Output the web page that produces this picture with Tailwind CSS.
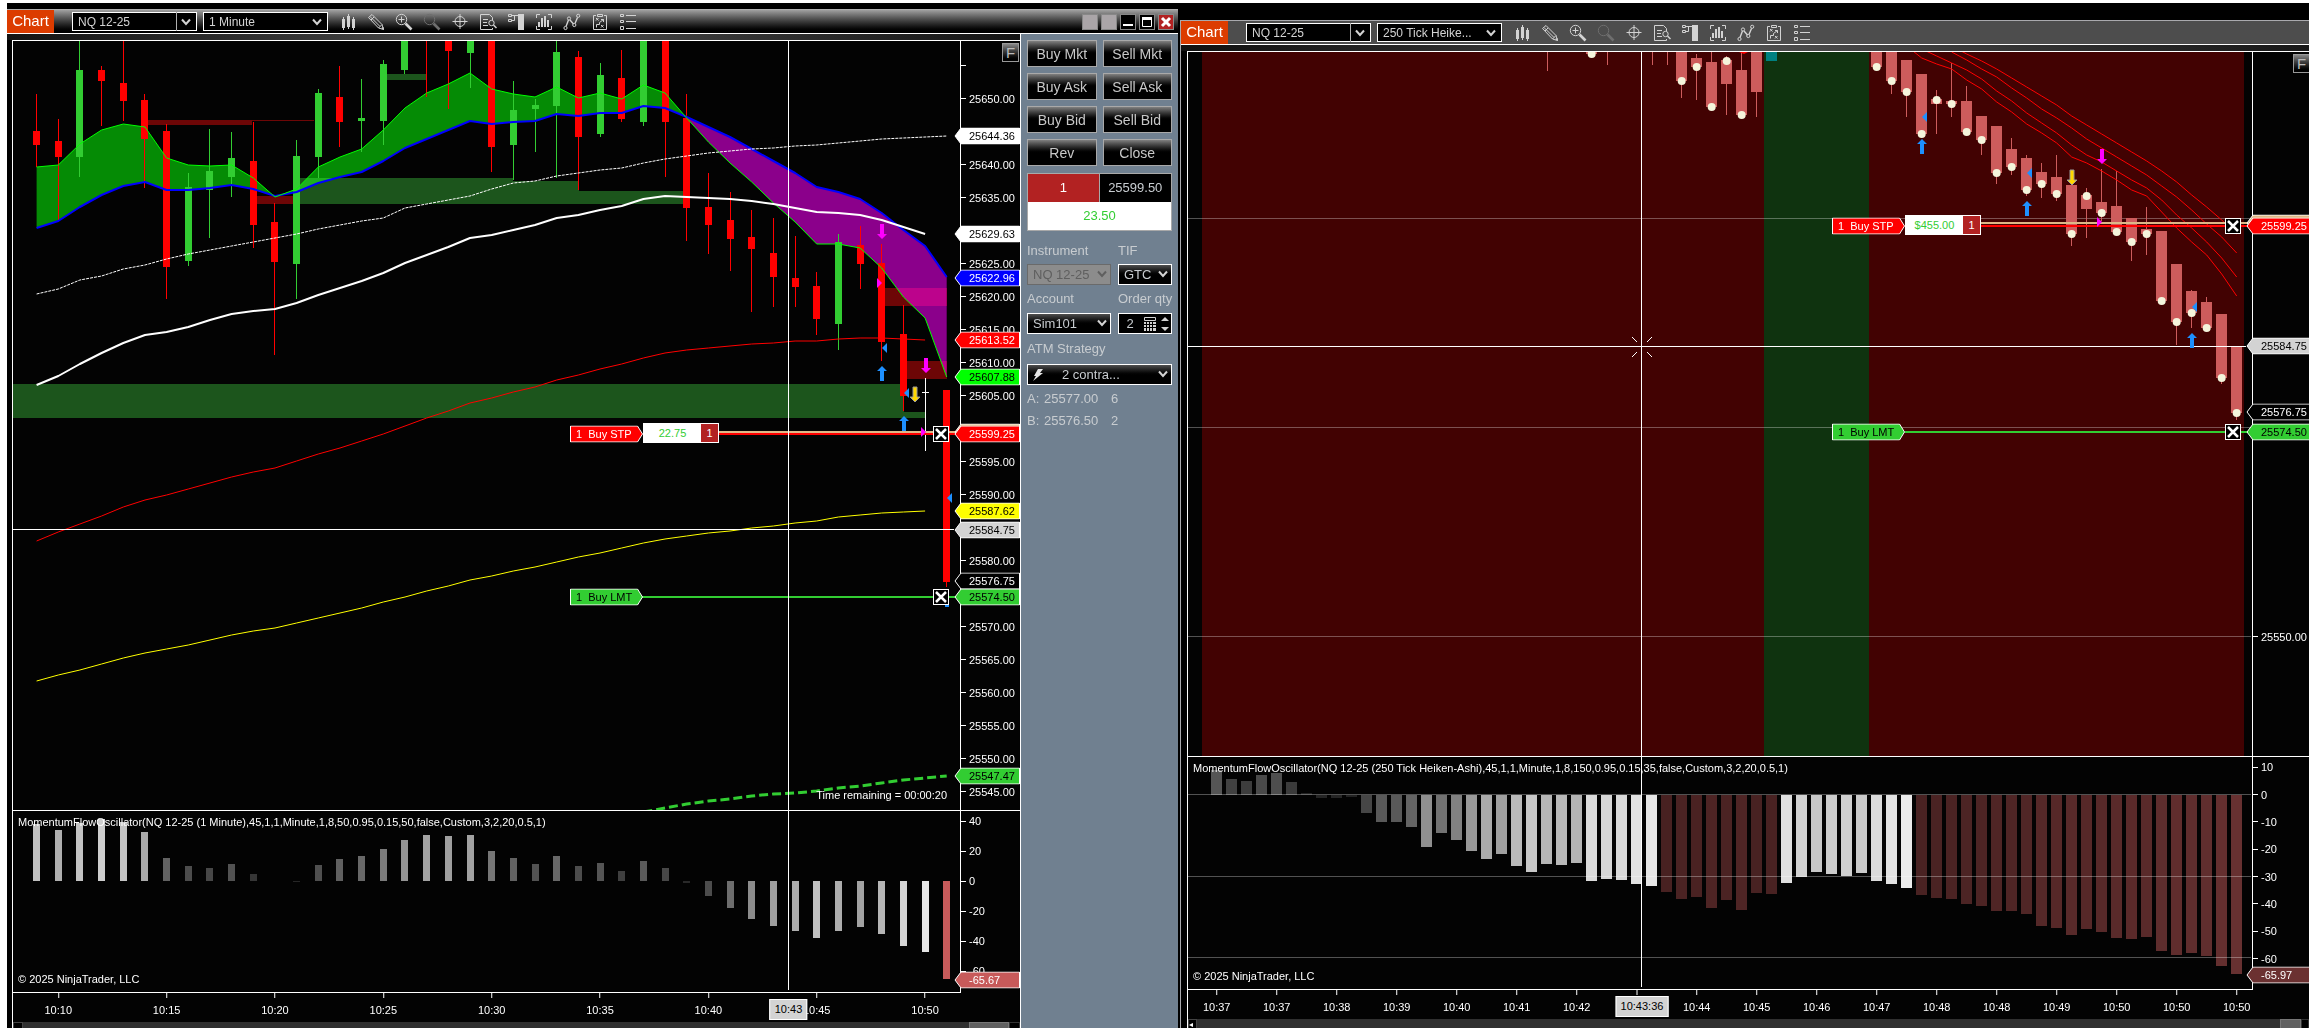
<!DOCTYPE html>
<html lang="en">
<head>
    <meta charset="UTF-8" />
    <meta name="viewport" content="width=device-width, initial-scale=1.0" />
    <title>NinjaTrader - NQ 12-25</title>
    <script src="https://cdn.jsdelivr.net/npm/@tailwindcss/browser@4"></script>
</head>
<body class="h-screen overflow-hidden bg-white pt-[3px] pr-[6px] pb-[5px] pl-[7px] font-['Liberation_Sans',Arial,sans-serif] text-[11px] text-white">

    <!-- toolbar icons -->
    <svg class="hidden" aria-hidden="true">
        <symbol id="i-candles" viewBox="0 0 24 20"><path fill="currentColor" d="M6 7h1V5h1v2h1v9H8v2H7v-2H6zM11 4h1V2h1v2h1v11h-1v2h-1v-2h-1zM16 7h1V5h1v2h1v9h-1v2h-1v-2h-1z" /></symbol>
        <symbol id="i-pencil" viewBox="0 0 24 20"><path fill="none" stroke="currentColor" d="M4.500 5.500L8 2.500l10 10 1.500 5-5-1.500zM6 4.500l10 10M14.500 16l3.500-3.500M7 8l3-3" /><path fill="currentColor" d="M17 16l2.500-1 .5 3z" /></symbol>
        <symbol id="i-zoomin" viewBox="0 0 24 20"><g fill="none" stroke="currentColor"><circle cx="9.500" cy="7.500" r="5.200" /><path d="M9.500 4.500v6M6.500 7.500h6" /><path stroke-width="2.600" d="M13.500 11.500l6 6" /></g></symbol>
        <symbol id="i-zoomout" viewBox="0 0 24 20"><g fill="none" stroke="currentColor"><circle cx="9.500" cy="7.500" r="5.200" /><path stroke-width="2.600" d="M13.500 11.500l6 6" /></g></symbol>
        <symbol id="i-cross" viewBox="0 0 24 20"><g fill="none" stroke="currentColor"><circle cx="12" cy="9.500" r="5" /><path d="M12 2v15M4.500 9.500h15" /></g></symbol>
        <symbol id="i-doc" viewBox="0 0 24 20"><g fill="none" stroke="currentColor"><path d="M16.500 8V5.500l-3-3h-9v15h12V16M7 7.500h5M7 10.500h4M7 13.500h5" /><circle cx="15.500" cy="11" r="2.700" /><path stroke-width="1.500" d="M17.500 13l3 3" /></g></symbol>
        <symbol id="i-dom" viewBox="0 0 24 20"><path fill="none" stroke="currentColor" d="M4.500 2.500h3v2h-3zM4.500 7.500h3v2h-3zM8 3.500h6M8 8.500h2.500v-5" /><path fill="currentColor" d="M14 2h6v16h-6z" /></symbol>
        <symbol id="i-bars" viewBox="0 0 24 20"><path fill="none" stroke="currentColor" d="M8 2.500H4.500V6M16 2.500h3.500V6M8 17.500H4.500V14M16 17.500h3.500V14" /><path fill="currentColor" d="M6 10h2v5H6zM9 6h2v9H9zM12 4h2v11h-2zM15 8h2v7h-2z" /></symbol>
        <symbol id="i-zigzag" viewBox="0 0 24 20"><g fill="none" stroke="currentColor"><path stroke-width="1.400" d="M6 14.500L8.500 8M10 8l3.500 4M15 11.500l2.500-6" /><circle cx="5.500" cy="16" r="1.600" /><circle cx="9" cy="6.500" r="1.600" /><circle cx="14.300" cy="13" r="1.600" /><circle cx="18.200" cy="3.800" r="1.600" /></g></symbol>
        <symbol id="i-board" viewBox="0 0 24 20"><path fill="none" stroke="currentColor" d="M8 3.500H5.500v14h13v-14H16M9.500 2.500h5v2h-5zM8 6l2.500 2.500M10.500 6L8 8.500M8.500 15.500v-3h3v-2l4-3M13 7.500h2.500V10M13 13l2.500 2.500M15.500 13L13 15.500" /></symbol>
        <symbol id="i-list" viewBox="0 0 24 20"><path fill="none" stroke="currentColor" d="M4.500 2.500h3v2h-3zM4.500 8.500h3v2h-3zM4.500 14.500h3v3h-3zM10 3.500h10M10 9.500h10M10 16.500h10" /></symbol>
        <symbol id="i-chevron" viewBox="0 0 10 8"><path fill="none" stroke="#d3d3d3" stroke-width="2" d="M1 1.500l4 4.500 4-4.500" /></symbol>
    </svg>

    <div class="flex h-full bg-black">

        <!-- 1 minute chart with chart trader -->
        <section class="mt-[6px] flex min-w-0 flex-[1171] flex-col">
            <header class="flex h-[25px] shrink-0 items-center border-t border-b border-t-[#b0b0b0] border-b-white bg-linear-to-b from-[#a0a0a0] to-black">
                <div id="toolbarA" class="flex h-full items-center"></div>
                <div class="mr-1 ml-auto flex gap-[3px]">
                    <button aria-label="Link instrument" class="h-4 w-4 border border-[#888] bg-[#aaa5a8]"></button>
                    <button aria-label="Link interval" class="h-4 w-4 border border-[#888] bg-[#aaa5a8]"></button>
                    <button aria-label="Minimize" class="h-4 w-4 border border-[#888] bg-black"><svg viewBox="0 0 14 14" class="block h-full w-full"><path fill="#fff" d="M2 9h10v2H2z" /></svg></button>
                    <button aria-label="Maximize" class="h-4 w-4 border border-[#888] bg-black"><svg viewBox="0 0 14 14" class="block h-full w-full"><path fill="none" stroke="#fff" d="M2.500 3.500h9v8h-9z" /><path fill="#fff" d="M2 2h10v3H2z" /></svg></button>
                    <button aria-label="Close window" class="h-4 w-4 border border-[#888] bg-[#b22222]"><svg viewBox="0 0 14 14" class="block h-full w-full"><path stroke="#fff" stroke-width="3" d="M3 3l8 8M11 3l-8 8" /></svg></button>
                </div>
            </header>
            <div class="flex min-h-0 flex-1">
                <div class="flex min-w-0 flex-1 flex-col border-r border-white">
                    <div class="h-[6px] shrink-0 bg-linear-to-r from-[#141414] via-[#505050] to-[#141414]"></div>
                    <div class="ml-[5px] flex min-h-0 flex-1 flex-col border-t border-l border-white bg-[#030303]">
                        <div class="flex min-h-0 flex-[769]">
                            <div id="priceA" class="relative min-w-0 flex-1"></div>
                            <div id="priceAxisA" class="relative w-[60px] border-l border-white">
                                <button class="absolute top-[2px] right-px z-10 h-[19px] w-[17px] border border-[#999] bg-linear-to-b from-[#888] to-black text-[15px] leading-[17px] text-[#bbb]">F</button>
                            </div>
                        </div>
                        <div class="flex min-h-0 flex-[182] border-t border-white">
                            <div id="oscA" class="relative min-w-0 flex-1 border-b border-white"></div>
                            <div id="oscAxisA" class="relative w-[60px] border-l border-white"></div>
                        </div>
                        <div id="timeA" class="relative mr-[60px] h-[29px] shrink-0"></div>
                        <div class="flex h-[6px] shrink-0 justify-between overflow-hidden bg-[#303030]">
                            <div class="h-2 w-[10px] border border-[#444] bg-black"></div>
                            <div class="flex"><div class="h-2 w-10 border border-[#777] bg-[#606060]"></div><div class="h-2 w-[11px] border border-[#333] bg-black"></div></div>
                        </div>
                    </div>
                </div>

                <!-- chart trader -->
                <aside class="w-[157px] shrink-0 bg-[#708090] px-[6px] pt-[6px] text-[13px] text-[#c8ccd0]">
                    <div id="orderButtons" class="grid grid-cols-2 gap-[6px]"></div>
                    <div class="mt-[7px] grid grid-cols-2 border border-[#a9a9a9] text-center leading-7">
                        <div class="border-r border-[#a9a9a9] bg-[#b22222] text-white">1</div>
                        <div class="bg-black">25599.50</div>
                        <div class="col-span-2 bg-white text-[#32cd32]">23.50</div>
                    </div>
                    <div class="mt-[10px] grid grid-cols-[84px_54px] justify-between gap-y-[3px]">
                        <label for="instrument" class="leading-5">Instrument</label>
                        <label for="tif" class="leading-5">TIF</label>
                        <div class="relative">
                            <select id="instrument" disabled class="block h-[21px] w-full appearance-none border border-[#6a6a6a] bg-[#8c8c8c] pl-[5px] text-[#5f5f5f] opacity-100"><option>NQ 12-25</option></select>
                            <svg class="pointer-events-none absolute top-[6px] right-[4px] h-2 w-[10px]" viewBox="0 0 10 8"><path fill="none" stroke="#5f5f5f" stroke-width="2" d="M1 1.500l4 4.500 4-4.500" /></svg>
                        </div>
                        <div class="relative">
                            <select id="tif" class="block h-[21px] w-full appearance-none border border-white bg-linear-to-b from-[#505050] to-black to-60% pl-[5px]"><option>GTC</option></select>
                            <svg class="pointer-events-none absolute top-[6px] right-[4px] h-2 w-[10px]"><use href="#i-chevron" /></svg>
                        </div>
                        <label for="account" class="leading-[22px]">Account</label>
                        <label for="qty" class="leading-[22px] whitespace-nowrap">Order qty</label>
                        <div class="relative">
                            <select id="account" class="block h-[21px] w-full appearance-none border border-white bg-linear-to-b from-[#505050] to-black to-60% pl-[5px]"><option>Sim101</option></select>
                            <svg class="pointer-events-none absolute top-[6px] right-[4px] h-2 w-[10px]"><use href="#i-chevron" /></svg>
                        </div>
                        <div class="flex h-[21px] items-center border border-white bg-black">
                            <input id="qty" type="text" value="2" class="w-[22px] bg-transparent text-center" />
                            <svg class="ml-[3px] h-[14px] w-3" viewBox="0 0 12 14"><path fill="none" stroke="#d3d3d3" d="M.5.5h11v3H.5z" /><path fill="#d3d3d3" d="M0 5h2v2H0zM3 5h2v2H3zM6 5h2v2H6zM9 5h3v2H9zM0 8h2v2H0zM3 8h2v2H3zM6 8h2v2H6zM9 8h3v2H9zM0 11h2v3H0zM3 11h2v3H3zM6 11h2v3H6zM9 11h3v3H9z" /></svg>
                            <svg class="ml-[5px] h-[14px] w-2" viewBox="0 0 8 14"><path fill="#d3d3d3" d="M0 4l4-4 4 4zM0 10h8l-4 4z" /></svg>
                        </div>
                        <label for="atm" class="col-span-2 leading-6">ATM Strategy</label>
                        <div class="relative col-span-2">
                            <select id="atm" class="block h-[21px] w-full appearance-none border border-white bg-linear-to-b from-[#505050] to-black to-60% pl-[34px]"><option>2 contra...</option></select>
                            <svg class="pointer-events-none absolute top-[5px] left-[6px] h-3 w-[10px]" viewBox="0 0 10 12"><path fill="#e5e5e5" d="M5 0h5L7 4h3L0 12l3-5H1z" /></svg>
                            <svg class="pointer-events-none absolute top-[6px] right-[4px] h-2 w-[10px]"><use href="#i-chevron" /></svg>
                        </div>
                    </div>
                    <dl class="mt-[3px] grid grid-cols-[17px_67px_1fr] leading-[22px]">
                        <dt>A:</dt><dd>25577.00</dd><dd>6</dd>
                        <dt>B:</dt><dd>25576.50</dd><dd>2</dd>
                    </dl>
                </aside>
            </div>
        </section>

        <!-- 250 tick chart -->
        <section class="mt-[17px] ml-[2px] flex min-w-0 flex-[1128] flex-col overflow-hidden border-t border-l border-[#a9a9ad]">
            <header class="flex h-6 shrink-0 items-center border-b border-white bg-[#4d4d4d]">
                <div id="toolbarB" class="flex h-full items-center"></div>
            </header>
            <div class="h-[6px] shrink-0 bg-linear-to-r from-[#101010] via-[#505050] to-[#181818]"></div>
            <div class="ml-[6px] flex min-h-0 flex-1 flex-col border-t border-l border-white bg-[#030303]">
                <div class="flex min-h-0 flex-[704]">
                    <div id="priceB" class="relative min-w-0 flex-1"></div>
                    <div id="priceAxisB" class="relative w-[57px] border-l border-white">
                        <button class="absolute top-[2px] right-0 z-10 h-[19px] w-4 border border-r-0 border-[#999] bg-linear-to-b from-[#888] to-black text-[15px] leading-[17px] text-[#bbb]">F</button>
                    </div>
                </div>
                <div class="flex min-h-0 flex-[233] border-t border-white">
                    <div id="oscB" class="relative min-w-0 flex-1 border-b border-white"></div>
                    <div id="oscAxisB" class="relative w-[57px] border-l border-white"></div>
                </div>
                <div id="timeB" class="relative mr-[57px] h-[29px] shrink-0"></div>
                <div class="flex h-[9px] shrink-0 justify-between overflow-hidden bg-[#303030]">
                    <div class="h-3 w-[9px] border border-[#444] bg-black text-[8px] leading-[10px]">◂</div>
                    <div class="flex"><div class="h-3 w-[21px] border border-[#777] bg-[#606060]"></div><div class="h-3 w-2 border border-[#333] bg-black"></div></div>
                </div>
            </div>
        </section>
    </div>

    <script>
        const $ = (id) => document.getElementById(id);
        const add = (id, html) => $(id).insertAdjacentHTML('beforeend', html);

        // ---- toolbars ----
        const icons = [['candles', 'Chart style'], ['pencil', 'Draw'], ['zoomin', 'Zoom in'], ['zoomout', 'Zoom out'], ['cross', 'Crosshair'], ['doc', 'Data box'], ['dom', 'Chart trader'], ['bars', 'Data series'], ['zigzag', 'Indicators'], ['board', 'Strategies'], ['list', 'Properties']];

        function renderToolbar(id, period) {
            add(id, `
                <div class="flex h-full w-[47px] items-center justify-center bg-[#dc3c00] text-[15px]">Chart</div>
                <div class="relative ml-[18px]">
                    <select aria-label="Instrument" class="block h-[19px] w-[125px] appearance-none border border-white bg-black pl-[5px] text-xs text-[#d3d3d3]"><option>NQ 12-25</option></select>
                    <span class="pointer-events-none absolute top-0 right-[20px] h-full w-px bg-[#b0b0b0]"></span>
                    <svg class="pointer-events-none absolute top-[6px] right-[6px] h-2 w-[10px]"><use href="#i-chevron" /></svg>
                </div>
                <div class="relative mr-2 ml-[6px]">
                    <select aria-label="Interval" class="block h-[19px] w-[125px] appearance-none border border-white bg-black pl-[5px] text-xs text-[#d3d3d3]"><option>${period}</option></select>
                    <svg class="pointer-events-none absolute top-[6px] right-[6px] h-2 w-[10px]"><use href="#i-chevron" /></svg>
                </div>
                <div class="flex gap-1">${icons.map(([name, label]) => `
                    <button aria-label="${label}" class="${name === 'zoomout' ? 'text-[#6e6e6e]' : 'text-[#d3d3d3]'}"><svg class="block h-5 w-6"><use href="#i-${name}" /></svg></button>`).join('')}
                </div>`);
        }
        renderToolbar('toolbarA', '1 Minute');
        renderToolbar('toolbarB', '250 Tick Heike...');

        ['Buy Mkt', 'Sell Mkt', 'Buy Ask', 'Sell Ask', 'Buy Bid', 'Sell Bid', 'Rev', 'Close'].forEach((label) => {
            add('orderButtons', `<button class="h-[27px] border border-[#a9a9a9] bg-linear-to-b from-[#808080] to-black to-55% text-sm text-[#c8c8c8]">${label}</button>`);
        });

        // ---- drawing helpers ----
        const rect = (x, y, w, h, fill, extra = '') => `<rect x="${x}" y="${y}" width="${w}" height="${h}" fill="${fill}" ${extra}/>`;
        const hline = (x1, x2, y, h, fill) => rect(x1, y, x2 - x1, h, fill);
        const pts = (ys, xOf, start = 0) => ys.map((y, i) => `${xOf(i + start).toFixed(1)},${y}`).join(' ');
        const line = (points, color, w = 1, extra = '') => `<polyline points="${points}" fill="none" stroke="${color}" stroke-width="${w}" stroke-linejoin="round" ${extra}/>`;
        const upArrow = (x, y) => `<path fill="#1e90ff" d="M${x} ${y}l5 5h-3v10h-4v-10h-3z"/>`;
        const downArrow = (x, y, fill = '#ff00ff', stroke = 'none') => `<path fill="${fill}" stroke="${stroke}" d="M${x} ${y + 15}l5-5h-3v-10h-4v10h-3z"/>`;
        const leftTri = (x, y) => `<path fill="#1e90ff" d="M${x} ${y}l5-5v10z"/>`;
        const rightTri = (x, y) => `<path fill="#ff00ff" d="M${x} ${y}l-5-5v10z"/>`;
        const candle = (x, [hi, top, bottom, lo], w, color) => {
            const left = Math.round(x - w / 2);
            return rect(left + (w - 1) / 2, hi, 1, lo - hi, color) + rect(left, top, w, Math.max(bottom - top, 1), color);
        };

        function renderPlot(id, pane, shapes) {
            add(id, `<svg class="absolute inset-0 h-full w-full" preserveAspectRatio="none" viewBox="${pane.x} ${pane.y} ${pane.w} ${pane.h}">${shapes}</svg>`);
        }
        const topOf = (pane, y) => `top:${((y - pane.y) / pane.h * 100).toFixed(3)}%`;
        const leftOf = (pane, x) => `left:${((x - pane.x) / pane.w * 100).toFixed(3)}%`;

        function renderScale(id, pane, ticks) {
            ticks.forEach(([y, text]) => add(id, `
                <div class="absolute left-0 flex h-3 -translate-y-1/2 items-center" style="${topOf(pane, y)}">
                    <span class="h-px w-[5px] bg-white"></span><span class="ml-[3px] leading-3">${text}</span>
                </div>`));
        }
        function renderTags(id, pane, tags) {
            tags.forEach(([y, text, fill, color]) => add(id, `
                <div class="absolute -left-[7px] h-[17px] w-[66px] -translate-y-1/2" style="${topOf(pane, y)}">
                    <svg class="absolute inset-0 h-full w-full" viewBox="0 0 66 17"><path fill="${fill}" stroke="#fff" d="M1 8.500l6-8h58.500v16H7z" /></svg>
                    <span class="relative block pl-[15px] leading-[17px] ${color}">${text}</span>
                </div>`));
        }
        function renderTimes(id, pane, times, cross) {
            times.forEach(([x, text]) => add(id, `
                <div class="absolute top-0 flex -translate-x-1/2 flex-col items-center" style="${leftOf(pane, x)}">
                    <span class="h-[5px] w-px bg-white"></span><span class="mt-[6px] leading-3">${text}</span>
                </div>`));
            add(id, `<div class="absolute top-[6px] -translate-x-1/2 border border-white bg-[#d3d3d3] px-1 leading-[19px] text-black" style="${leftOf(pane, cross[0])}">${cross[1]}</div>`);
        }
        // working order: flag, optional PnL box and quantity, cancel button at the right end
        function renderOrder(id, pane, x, y, cancelX, order) {
            add(id, `
                <div class="absolute h-[17px] w-[73px] -translate-x-full -translate-y-1/2" style="${leftOf(pane, x)};${topOf(pane, y)}">
                    <svg class="absolute inset-0 h-full w-full" viewBox="0 0 73 17"><path fill="${order.fill}" stroke="#fff" d="M.5.500h67l5 8-5 8H.5z" /></svg>
                    <span class="relative block pl-[6px] leading-[17px] whitespace-pre ${order.color}">1  ${order.name}</span>
                </div>
                <button aria-label="Cancel ${order.name}" class="absolute z-10 h-4 w-4 -translate-x-1/2 -translate-y-1/2 border border-white bg-black" style="${leftOf(pane, cancelX)};${topOf(pane, y)}">
                    <svg viewBox="0 0 14 14" class="block h-full w-full"><path stroke="#fff" stroke-width="2.500" d="M2 2l10 10M12 2L2 12" /></svg>
                </button>`);
            if (order.pnl) add(id, `
                <div class="absolute flex h-5 -translate-y-[11px] border border-white bg-white text-center leading-[18px]" style="${leftOf(pane, x)};${topOf(pane, y)}">
                    <span class="w-[57px] text-[#32cd32]">${order.pnl}</span><span class="w-[17px] bg-[#b22222]">1</span>
                </div>`);
        }

        // ================= 1 minute chart =================
        const paneA = { x: 13, y: 41, w: 947, h: 769 };
        const oscPaneA = { x: 13, y: 811, w: 947, h: 181 };
        const xA = (i) => 36.6 + 21.67 * i;
        const yA = (price) => 98.7 + (25650 - price) * 6.6;

        // high, body top, body bottom, low
        const candlesA = [
            ['r', 94, 131, 145, 167], ['r', 119, 141, 157, 220], ['g', 40, 70, 157, 177], ['r', 66, 70, 81, 126], ['r', 40, 83, 101, 121],
            ['r', 94, 100, 139, 188], ['r', 124, 131, 267, 299], ['g', 173, 187, 261, 266], ['g', 129, 171, 190, 238], ['g', 132, 158, 177, 197],
            ['r', 122, 161, 225, 248], ['r', 203, 222, 262, 355], ['g', 140, 156, 264, 299], ['g', 89, 93, 157, 178], ['r', 66, 97, 122, 147],
            ['g', 79, 118, 121, 152], ['g', 60, 64, 121, 145], ['g', 40, 40, 70, 74], ['r', 40, 40, 41, 97], ['r', 40, 40, 51, 109],
            ['g', 40, 40, 53, 88], ['r', 40, 40, 147, 172], ['g', 81, 110, 145, 180], ['g', 99, 105, 109, 152], ['g', 40, 52, 106, 178],
            ['r', 51, 57, 137, 190], ['g', 63, 75, 134, 137], ['r', 50, 78, 119, 122], ['g', 40, 40, 122, 126], ['r', 40, 40, 122, 177],
            ['r', 94, 118, 208, 241], ['r', 173, 207, 225, 254], ['r', 192, 220, 239, 271], ['r', 210, 237, 249, 312], ['r', 218, 253, 277, 307],
            ['r', 236, 278, 287, 307], ['r', 272, 286, 319, 335], ['g', 234, 242, 324, 350], ['r', 226, 245, 264, 289], ['r', 244, 263, 342, 361],
            ['r', 305, 334, 396, 411], ['w', 378, 392, 393, 451], ['r', 390, 390, 582, 587],
        ];
        const fastA = [167, 165, 144, 130, 124, 127, 158, 165, 166, 165, 178, 197, 189, 167, 157, 149, 130, 108, 93, 84, 73, 89, 94, 97, 87, 98, 93, 99, 85, 93, 118, 142, 163, 182, 203, 222, 244, 244, 248, 268, 297, 318, 377];
        const slowA = [228, 221, 207, 195, 186, 182, 190, 190, 188, 185, 189, 196, 192, 183, 177, 172, 161, 148, 139, 130, 121, 124, 122, 121, 114, 116, 113, 113, 106, 108, 117, 127, 137, 149, 161, 173, 187, 192, 199, 213, 230, 246, 277];
        const dottedA = [294, 289, 280, 276, 269, 265, 259, 254, 250, 246, 242, 238, 234, 229, 225, 221, 218, 208, 204, 200, 196, 189, 183, 181, 176, 173, 170, 168, 163, 159, 156, 153, 151, 149, 148, 146, 145, 143, 141, 139, 138, 137, 136];
        const whiteA = [385, 376, 364, 353, 343, 335, 332, 327, 320, 314, 311, 309, 303, 295, 288, 281, 273, 263, 255, 247, 238, 235, 230, 225, 218, 215, 210, 206, 199, 196, 197, 198, 199, 201, 204, 208, 212, 213, 215, 220, 227, 234];
        const redA = [541, 532, 524, 516, 507, 500, 495, 489, 483, 477, 472, 468, 461, 454, 448, 441, 434, 426, 418, 411, 403, 398, 392, 387, 380, 375, 369, 364, 358, 353, 350, 348, 346, 344, 343, 341, 341, 339, 338, 338, 339, 340];
        const yellowA = [681, 675, 670, 664, 658, 653, 649, 645, 640, 635, 631, 628, 623, 618, 613, 608, 602, 597, 591, 586, 580, 576, 571, 567, 562, 557, 553, 548, 543, 539, 536, 533, 531, 528, 526, 523, 521, 517, 515, 513, 512, 511];
        const dashedA = [812, 808, 804, 801, 799, 796, 794, 793, 791, 788, 786, 783, 780, 778, 776];
        const colorsA = { r: '#ff0000', g: '#32cd32', w: '#ffffff' };

        // cloud between the averages, split where they cross
        const cloud = (from, to, fill) => {
            const up = pts(fastA.slice(from, to + 1), xA, from);
            const down = slowA.slice(from, to + 1).map((y, i) => `${xA(i + from).toFixed(1)},${y}`).reverse().join(' ');
            return `<polygon points="${up} ${down}" fill="${fill}"/>`;
        };
        const zone = (x1, x2, y1, y2, fill) => rect(x1, y1, x2 - x1, y2 - y1, fill, 'style="mix-blend-mode:screen" shape-rendering="crispEdges"');

        renderPlot('priceA', paneA, `
            ${cloud(0, 30, '#058b05')}${cloud(30, 42, '#8b008b')}
            ${zone(148, 252, 120, 125, '#6b0303')}${zone(252, 314, 120, 121, '#6b0303')}${zone(256, 296, 196, 204, '#6b0303')}
            ${zone(387, 426, 74, 80, '#195319')}${zone(296, 513, 178, 204, '#195319')}${zone(513, 579, 181, 204, '#195319')}${zone(579, 686, 191, 204, '#195319')}
            ${zone(13, 904, 384, 418, '#195319')}${zone(904, 925, 412, 418, '#195319')}
            ${zone(885, 947, 288, 306, '#6b0303')}${zone(907, 947, 361, 379, '#6b0303')}
            <g shape-rendering="crispEdges">${candlesA.map(([c, ...v], i) => candle(xA(i), v, 7, colorsA[c])).join('')}</g>
            ${line(pts(slowA, xA), '#0000ff', 2)}${line(pts(fastA, xA), '#00ff00', 1)}
            ${line(pts(dottedA, xA), '#fff', 1, 'stroke-dasharray="3 1"')}${line(pts(whiteA, xA), '#fff', 2)}
            ${line(pts(redA, xA), '#ff0000')}${line(pts(yellowA, xA), '#ffff00')}
            ${line(pts(dashedA, xA, 28), '#32cd32', 3, 'stroke-dasharray="9 4"')}
            <g shape-rendering="crispEdges">${hline(719, 960, 431, 2, '#deb887')}${hline(719, 960, 433, 2, '#ff0000')}${hline(642, 960, 596, 2, '#32cd32')}
            ${hline(13, 954, 529, 1, '#fff')}${rect(788, 41, 1, 769, '#fff')}</g>
            ${downArrow(882, 224)}${downArrow(926, 358)}${downArrow(915, 387, '#ffd700', '#999')}
            ${upArrow(882, 366)}${upArrow(904, 416)}${rect(945, 600, 4, 7, '#1e90ff')}
            ${rightTri(882, 283)}${rightTri(926, 432)}${leftTri(882, 348)}${leftTri(904, 393)}${leftTri(947, 498)}`);

        const ticksA = [[yA(25655), '']];
        for (let p = 25650; p >= 25545; p -= 5) {
            if (![25630, 25600, 25585, 25575].includes(p)) ticksA.push([yA(p), p.toFixed(2)]);
        }
        renderScale('priceAxisA', paneA, ticksA);
        renderTags('priceAxisA', paneA, [
            [136, '25644.36', '#fff', 'text-black'], [234, '25629.63', '#fff', 'text-black'], [278, '25622.96', '#0000ff', 'text-white'],
            [340, '25613.52', '#ff0000', 'text-white'], [377, '25607.88', '#00ff00', 'text-black'], [432, '', '#deb887', 'text-black'],
            [434, '25599.25', '#ff0000', 'text-white'], [511, '25587.62', '#ffff00', 'text-black'], [530, '25584.75', '#d3d3d3', 'text-black'],
            [581, '25576.75', '#000', 'text-white'], [597, '25574.50', '#32cd32', 'text-black'], [776, '25547.47', '#32cd32', 'text-black'],
        ]);
        renderOrder('priceA', paneA, 643, 434, 941, { name: 'Buy STP', fill: '#ff0000', color: 'text-white', pnl: '22.75' });
        renderOrder('priceA', paneA, 643, 597, 941, { name: 'Buy LMT', fill: '#32cd32', color: 'text-black' });
        add('priceA', '<p class="absolute right-[13px] bottom-[9px] leading-3">Time remaining = 00:00:20</p>');

        const oscA = [57, 51, 58, 62, 59, 49, 23, 15, 13, 17, 7, 0, -1, 16, 22, 25, 32, 41, 46, 45, 46, 30, 23, 17, 25, 15, 18, 10, 20, 13, -2, -15, -27, -38, -45, -50, -57, -50, -46, -53, -65, -71, -98];
        renderPlot('oscA', oscPaneA, `<g shape-rendering="crispEdges">${oscA.map((v, i) => {
            const g = Math.round(35 + Math.abs(v) * 2.75);
            return rect(Math.round(xA(i) - 3.5), v > 0 ? 881 - v : 881, 7, Math.abs(v), i === 42 ? '#c75a5a' : `rgb(${g},${g},${g})`);
        }).join('')}${rect(788, 811, 1, 179, '#fff')}</g>`);
        add('oscA', `
            <p class="absolute top-[5px] left-[5px] leading-3 whitespace-nowrap">MomentumFlowOscillator(NQ 12-25 (1 Minute),45,1,1,Minute,1,8,50,0.95,0.15,50,false,Custom,3,2,20,0.5,1)</p>
            <p class="absolute bottom-[7px] left-[5px] leading-3">© 2025 NinjaTrader, LLC</p>`);
        renderScale('oscAxisA', oscPaneA, [40, 20, 0, -20, -40, -60].map((v) => [881 - v * 1.49, v]));
        renderTags('oscAxisA', oscPaneA, [[979, '-65.67', '#c75a5a', 'text-white']]);
        renderTimes('timeA', paneA, ['10:10', '10:15', '10:20', '10:25', '10:30', '10:35', '10:40', '10:45', '10:50'].map((t, k) => [xA(1 + 5 * k), t]), [788.5, '10:43']);

        // ================= 250 tick chart =================
        const paneB = { x: 1188, y: 52, w: 1064, h: 704 };
        const oscPaneB = { x: 1188, y: 757, w: 1064, h: 232 };
        const xB = (i) => 1216.7 + 15 * i;

        // bar index, high, body top, body bottom, low, dot
        const candlesB = [
            [22, 51, 51, 51, 71, 0], [25, 52, 52, 54, 54, 54], [26, 51, 51, 51, 65, 0], [29, 51, 51, 51, 65, 0], [30, 51, 51, 51, 65, 0],
            [31, 52, 52, 81, 98, 81], [32, 54, 58, 67, 100, 67], [33, 52, 62, 107, 107, 107], [34, 56, 60, 84, 115, 61], [35, 52, 70, 115, 115, 115], [36, 52, 52, 92, 117, 0],
            [44, 52, 52, 67, 67, 67], [45, 52, 52, 81, 94, 81], [46, 60, 60, 92, 117, 92], [47, 74, 74, 134, 134, 134], [48, 90, 99, 104, 134, 100],
            [49, 63, 101, 104, 117, 104], [50, 86, 101, 132, 132, 132], [51, 116, 116, 140, 155, 140], [52, 126, 126, 173, 184, 173], [53, 138, 149, 167, 175, 167],
            [54, 155, 158, 190, 196, 190], [55, 163, 172, 184, 198, 184], [56, 155, 177, 194, 201, 194], [57, 185, 185, 234, 246, 234], [58, 188, 195, 209, 238, 196],
            [59, 169, 202, 213, 221, 213], [60, 171, 206, 232, 232, 232], [61, 218, 218, 242, 261, 242], [62, 207, 229, 234, 255, 234], [63, 231, 231, 301, 301, 301],
            [64, 264, 264, 322, 345, 322], [65, 290, 291, 313, 328, 313], [66, 297, 302, 328, 328, 328], [67, 314, 314, 378, 384, 378], [68, 346, 346, 413, 420, 413],
        ];
        // average ribbon: first bar index, then one y per bar
        const ribbonB = [
            [46, 46, 58, 64, 69, 80, 89, 102, 112, 124, 133, 143, 157, 163, 171, 180, 190, 196, 212, 228, 242, 255, 274, 296],
            [47, 49, 56, 63, 70, 79, 91, 101, 113, 123, 133, 145, 155, 162, 171, 180, 188, 200, 215, 228, 242, 258, 277],
            [49, 52, 60, 69, 77, 88, 98, 109, 118, 128, 139, 148, 157, 166, 175, 186, 197, 210, 224, 237, 253],
            [49, 46, 54, 61, 69, 78, 87, 96, 105, 116, 125, 134, 143, 152, 161, 171, 182, 195, 207, 220, 234],
        ];
        renderPlot('priceB', paneB, `
            <g shape-rendering="crispEdges">
                ${rect(1202, 52, 562, 704, '#420202')}${rect(1764, 52, 105, 704, '#0f330f')}${rect(1869, 52, 375, 704, '#420202')}
                ${[218, 427, 636].map((y) => hline(1188, 2251, y, 1, '#ffffff50')).join('')}
                ${rect(1766, 52, 11, 9, '#008080')}
                ${candlesB.map(([i, ...v]) => (v[2] === 51 ? rect(Math.round(xB(i)), 51, 1, v[3] - 51, '#cd5c5c') : candle(xB(i), v, 11, '#cd5c5c'))).join('')}
            </g>
            <path fill="#f00" d="M1739 52h9l-4 2z"/>
            ${ribbonB.map(([start, ...ys]) => line(pts(ys, xB, start), '#ff0000')).join('')}
            ${candlesB.map(([i, , , , , dot]) => (dot ? `<circle cx="${xB(i)}" cy="${dot}" r="4" fill="#f5f5dc"/>` : '')).join('')}
            <g shape-rendering="crispEdges">${hline(1981, 2252, 222, 2, '#deb887')}${hline(1981, 2252, 225, 2, '#ff0000')}${hline(1905, 2252, 431, 2, '#32cd32')}
            ${hline(1188, 2246, 346, 1, '#fff')}${rect(1641, 52, 1, 704, '#fff')}</g>
            <path stroke="#fff" d="M1632 337l5 5M1652 337l-5 5M1632 357l5-5M1652 357l-5-5"/>
            ${upArrow(1922, 139)}${upArrow(2027, 201)}${upArrow(2192, 333)}
            ${downArrow(2072, 170, '#ffd700', '#999')}${downArrow(2102, 149)}
            ${leftTri(1922, 117)}${leftTri(2027, 173)}${leftTri(2192, 307)}${rightTri(2102, 222)}`);
        renderScale('priceAxisB', paneB, [[636.5, '25550.00']]);
        renderTags('priceAxisB', paneB, [
            [223, '', '#deb887', 'text-black'], [226, '25599.25', '#ff0000', 'text-white'], [346, '25584.75', '#d3d3d3', 'text-black'],
            [412.5, '25576.75', '#000', 'text-white'], [432, '25574.50', '#32cd32', 'text-black'],
        ]);
        renderOrder('priceB', paneB, 1905, 226, 2233, { name: 'Buy STP', fill: '#ff0000', color: 'text-white', pnl: '$455.00' });
        renderOrder('priceB', paneB, 1905, 432, 2233, { name: 'Buy LMT', fill: '#32cd32', color: 'text-black' });

        const oscB = [25, 16, 14, 20, 22, 13, 2, -3, -3, -2, -18, -27, -27, -32, -52, -38, -45, -56, -64, -59, -71, -77, -69, -70, -68, -86, -84, -85, -89, -91,
            -97, -104, -102, -113, -105, -115, -98, -99, -88, -82, -77, -79, -81, -78, -86, -89, -93, -100, -103, -104, -109, -111, -116, -116, -119, -131, -133, -140, -134, -137, -143, -144, -142, -156, -160, -158, -161, -171, -179];
        renderPlot('oscB', oscPaneB, `<g shape-rendering="crispEdges">${oscB.map((v, i) => {
            const n = Math.abs(v);
            const g = Math.round(30 + n * 2.2);
            const strong = n > 94;
            const fill = strong ? `rgb(${Math.round(35 + n * .38)},${Math.round(15 + n * .19)},${Math.round(15 + n * .19)})` : `rgb(${g},${g},${g})`;
            return rect(Math.round(xB(i) - 5.5), v > 0 ? 795 - v : 795, 11, n, fill);
        }).join('')}${[794, 876, 957].map((y) => hline(1188, 2251, y, 1, '#ffffff50')).join('')}${rect(1641, 757, 1, 230, '#fff')}</g>`);
        add('oscB', `
            <p class="absolute top-[5px] left-[5px] leading-3 whitespace-nowrap">MomentumFlowOscillator(NQ 12-25 (250 Tick Heiken-Ashi),45,1,1,Minute,1,8,150,0.95,0.15,35,false,Custom,3,2,20,0.5,1)</p>
            <p class="absolute bottom-[7px] left-[5px] leading-3">© 2025 NinjaTrader, LLC</p>`);
        renderScale('oscAxisB', oscPaneB, [10, 0, -10, -20, -30, -40, -50, -60].map((v) => [794.5 - v * 2.72, v]));
        renderTags('oscAxisB', oscPaneB, [[974, '-65.97', '#6b3131', 'text-white']]);
        // the bar under the crosshair keeps its tick but not its label
        renderTimes('timeB', paneB, ['10:37', '10:37', '10:38', '10:39', '10:40', '10:41', '10:42', '', '10:44', '10:45', '10:46', '10:47', '10:48', '10:48', '10:49', '10:50', '10:50', '10:50'].map((t, k) => [xB(4 * k), t]), [1642, '10:43:36']);
    </script>
</body>
</html>
